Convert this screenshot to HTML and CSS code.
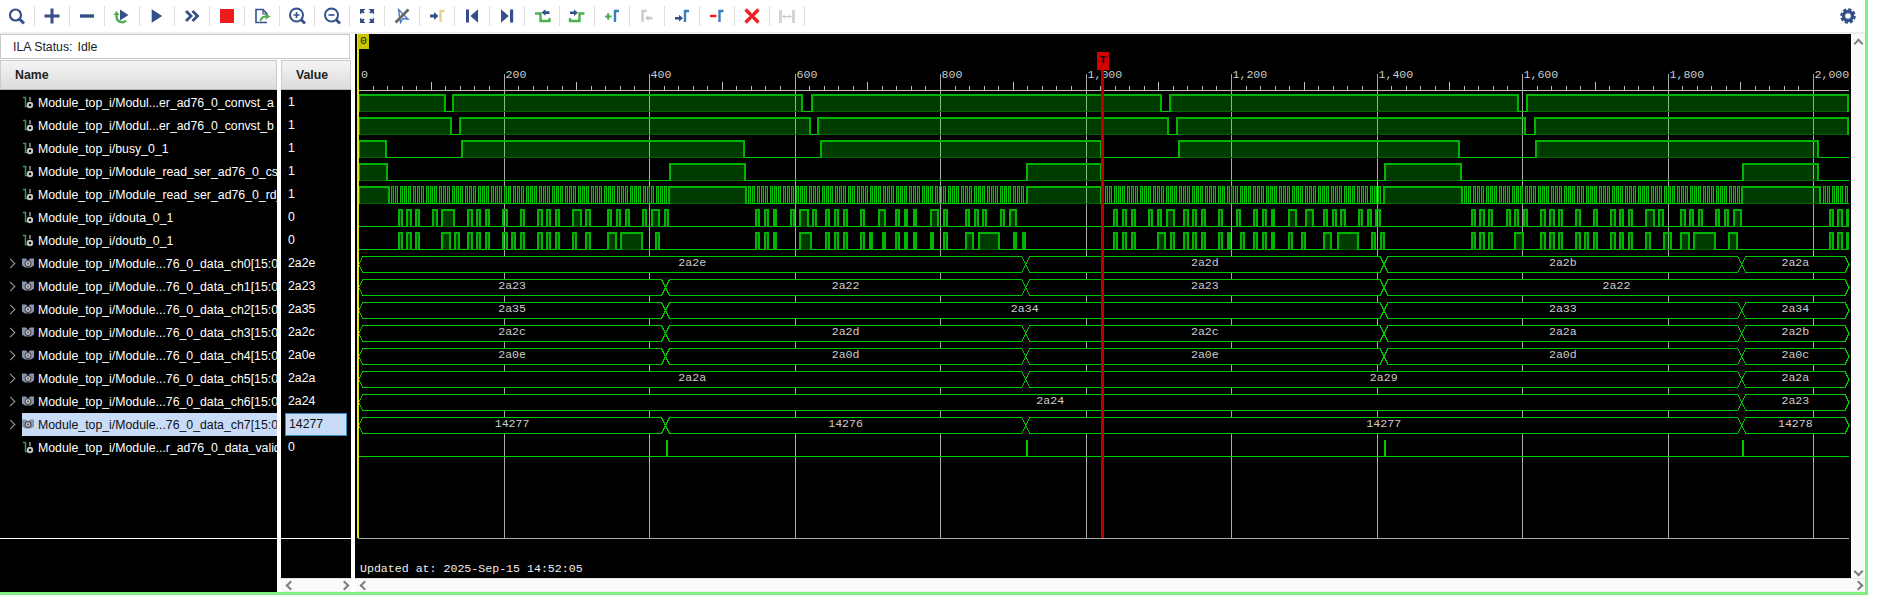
FILE: index.html
```html
<!DOCTYPE html>
<html lang="en">
<head>
    <meta charset="UTF-8">
    <title>ILA Waveform</title>
    <link rel="stylesheet" href="styles.css">
</head>
<body>
<div class="app">
    <div class="toolbar">
        <div class="tool"><svg viewBox="0 0 24 24"><circle class="nv" cx="10.5" cy="11" r="5.5" stroke-width="2.2"/><path class="nv" d="M14.5 15l4.5 4.5" stroke-width="3"/></svg></div>
        <div class="tool"><svg viewBox="0 0 24 24"><path class="nv" d="M4.5 12h15M12 4.5v15" stroke-width="3"/></svg></div>
        <div class="tool"><svg viewBox="0 0 24 24"><path class="nv" d="M5 12h14" stroke-width="3.4"/></svg></div>
        <div class="tool"><svg viewBox="0 0 24 24"><path class="gr" d="M6.5 9v4a5.5 5.5 0 0 0 9.5 3.5" stroke-width="2.4"/><path class="fnv" d="M10 5.5l8.5 5.5-8.5 5.5z"/><path class="fgr" d="M3.5 11h6l-3-4z"/></svg></div>
        <div class="tool"><svg viewBox="0 0 24 24"><path class="fnv" d="M6.7 5.2L17.2 12 6.7 18.8z"/></svg></div>
        <div class="tool"><svg viewBox="0 0 24 24"><path class="nv" d="M6 7l5 5-5 5M12.5 7l5 5-5 5" stroke-width="2.8"/></svg></div>
        <div class="tool"><svg viewBox="0 0 24 24"><rect x="5" y="5" width="14" height="14" fill="#ee1c1c"/></svg></div>
        <div class="tool"><svg viewBox="0 0 24 24"><path class="nv" d="M17 14V10l-4-4.5H6v13h11" stroke-width="1.6"/><path class="nv" d="M13 5.5V10h4" stroke-width="1.2"/><path class="gr" d="M10.5 17c.5-3 2.5-4.5 6-4.5" stroke-width="2"/><path class="fgr" d="M15.5 9.5l5 3-5 3z"/></svg></div>
        <div class="tool"><svg viewBox="0 0 24 24"><circle class="nv" cx="11.5" cy="11" r="6.5" stroke-width="2"/><path class="nv" d="M8.5 11h6M11.5 8v6" stroke-width="1.6"/><path class="nv" d="M16 15.5l4 4" stroke-width="2.8"/></svg></div>
        <div class="tool"><svg viewBox="0 0 24 24"><circle class="nv" cx="11.5" cy="11" r="6.5" stroke-width="2"/><path class="nv" d="M8.5 11h6" stroke-width="1.6"/><path class="nv" d="M16 15.5l4 4" stroke-width="2.8"/></svg></div>
        <div class="tool"><svg viewBox="0 0 24 24"><path class="fnv" d="M5 5h5.5L5 10.5zM19 5v5.5L13.5 5zM5 19v-5.5l5.5 5.5zM19 19h-5.5l5.5-5.5z"/><path class="nv" d="M6 6l3 3M18 6l-3 3M6 18l3-3M18 18l-3-3" stroke-width="1.8"/></svg></div>
        <div class="tool"><svg viewBox="0 0 24 24"><path d="M8.5 5.500l2 13 2.500-4 5 .5z" fill="none" stroke="#4a78b8" stroke-width="1.4"/><path d="M5.5 18.5L18.5 5.500" fill="none" stroke="#666" stroke-width="2.6"/></svg></div>
        <div class="tool"><svg viewBox="0 0 24 24"><path class="fnv" d="M5 10.500h4V8l4.500 4L9 16v-2.500H5z"/><path class="mk" d="M15.5 18V7h4" stroke="#e8d088"/></svg></div>
        <div class="tool"><svg viewBox="0 0 24 24"><path class="fnv" d="M6 5.500h3v13H6zM18 5.300v13.400L10.500 12z"/></svg></div>
        <div class="tool"><svg viewBox="0 0 24 24"><path class="fnv" d="M6 5.300v13.400L13.700 12zM15 5.500h3.200v13H15z"/></svg></div>
        <div class="tool"><svg viewBox="0 0 24 24"><path class="gr" d="M5 9.500h5.500V17H19.500V14" stroke-width="2.4"/><path class="fnv" d="M11.500 8.500l4-3.200v2h4v2.600h-4v1.800z"/></svg></div>
        <div class="tool"><svg viewBox="0 0 24 24"><path class="gr" d="M5 14v3h9.500V9.500H19.500" stroke-width="2.4"/><path class="fnv" d="M13 8.700l-4-3.200v2H5v2.600h4v1.800z"/></svg></div>
        <div class="tool"><svg viewBox="0 0 24 24"><path class="gr" d="M5 12.500h6.500M8.200 9.200v6.600" stroke-width="2.2"/><path class="mk" d="M15 18V7h4" stroke="#3c80b8"/></svg></div>
        <div class="tool"><svg viewBox="0 0 24 24"><path class="mk" d="M7.500 18V7h4" stroke="#cacaca"/><path d="M10 14l3.500-3v1.800h4v2.600h-4V17z" fill="#cacaca"/></svg></div>
        <div class="tool"><svg viewBox="0 0 24 24"><path class="fnv" d="M5 13h4v-2.200l4 3.400-4 3.400v-2.200H5z"/><path class="mk" d="M15 18V7h4" stroke="#3c80b8"/></svg></div>
        <div class="tool"><svg viewBox="0 0 24 24"><path d="M5 12h6.500" stroke="#ee1c1c" stroke-width="2.4" fill="none"/><path class="mk" d="M14.500 18V7h4" stroke="#3c80b8"/></svg></div>
        <div class="tool"><svg viewBox="0 0 24 24"><path d="M5.500 5.500l13 13M18.500 5.500l-13 13" stroke="#ee1c1c" stroke-width="3.2" fill="none"/></svg></div>
        <div class="tool"><svg viewBox="0 0 24 24"><path d="M5.500 6v13M18.500 6v13" stroke="#d4d4d4" stroke-width="3" fill="none"/><path d="M8 12.500h8M10 10.500l-2 2 2 2M14 10.500l2 2-2 2" stroke="#c4c4c4" fill="none"/></svg></div>
        <div class="tool-gear"><svg viewBox="0 0 24 24"><circle cx="12" cy="12" r="4.5" fill="none" stroke="#34508a" stroke-width="3.4"/><circle cx="12" cy="12" r="6.6" fill="none" stroke="#34508a" stroke-width="2.4" stroke-dasharray="3.2 1.98"/></svg></div>
    </div>

    <div class="main">
        <div class="left">
            <div class="status">ILA Status:<span class="status-val">Idle</span></div>
            <div class="cols">
                <div class="col-names">
                    <div class="col-head">Name</div>
                    <div class="rows" id="nameRows"></div>
                </div>
                <div class="col-values">
                    <div class="col-head">Value</div>
                    <div class="rows" id="valueRows"></div>
                    <div class="col-rest"></div>
                    <div class="hscroll"><span class="chev chev-l"></span><span class="chev chev-r"></span></div>
                </div>
            </div>
        </div>
        <div class="right">
            <div class="wave-row">
                <svg class="wave" id="wave" viewBox="355 34 1496 544" width="1496" height="544"></svg>
                <div class="vscroll"><span class="chev chev-u"></span><span class="chev chev-d"></span></div>
            </div>
            <div class="hscroll"><span class="chev chev-l"></span><span class="chev chev-r"></span></div>
        </div>
    </div>
</div>
<script src="wave.js"></script>
</body>
</html>
```

FILE: styles.css
```css
* {
    box-sizing: border-box;
}
body {
    margin: 0;
    background: #fff;
    font-family: "Liberation Sans", Arial, sans-serif;
    font-size: 12.3px;
    overflow: hidden;
}
.app {
    width: 1868px;
    height: 595px;
    border-right: 3px solid #80ee80;
    border-bottom: 3px solid #80ee80;
}

/* toolbar */
.toolbar {
    display: flex;
    align-items: center;
    height: 34px;
    border-bottom: 2px solid #eeeeee;
    background: #fff;
}
.tool {
    width: 35px;
    height: 20px;
    border-right: 1px solid #dddddd;
    display: flex;
    align-items: center;
    justify-content: center;
    padding-right: 1px;
}
.tool svg, .tool-gear svg {
    flex: none;
    width: 24px;
    height: 24px;
}
.tool-gear {
    margin-left: auto;
    width: 34px;
    display: flex;
    justify-content: center;
}
.nv {
    fill: none;
    stroke: #34508a;
}
.gr {
    fill: none;
    stroke: #4cb050;
}
.fnv {
    fill: #34508a;
}
.fgr {
    fill: #4cb050;
}
.mk {
    fill: none;
    stroke-width: 2.4;
}

/* left panels */
.main {
    display: flex;
    height: 558px;
}
.left {
    width: 351px;
    display: flex;
    flex-direction: column;
}
.status {
    width: 350px;
    height: 25px;
    margin-bottom: 1px;
    padding-left: 12px;
    line-height: 24px;
    border: 1px solid #c8c8c8;
    color: #222;
}
.status-val {
    margin-left: 5px;
}
.cols {
    display: flex;
    gap: 4px;
    flex: 1;
}
.col-names {
    width: 277px;
    background: #000;
}
.col-values {
    width: 70px;
    background: #000;
    display: flex;
    flex-direction: column;
}
.col-head {
    height: 30px;
    line-height: 29px;
    font-weight: bold;
    color: #222;
    background: linear-gradient(#f4f4f4, #dcdcdc);
    border: 1px solid #cccccc;
    border-bottom-color: #b8b8b8;
    padding-left: 14px;
}
.rows {
    height: 449px;
    padding-top: 1px;
    border-bottom: 1px solid #fff;
}
.col-rest {
    flex: 1;
}
.row {
    display: flex;
    align-items: center;
    height: 23px;
    color: #fff;
    white-space: nowrap;
    overflow: hidden;
}
.row-arrow {
    flex: none;
    width: 22px;
    display: flex;
    justify-content: center;
    padding-right: 2px;
}
.row-main {
    flex: 1;
    min-width: 0;
    height: 23px;
    display: flex;
    align-items: center;
    overflow: hidden;
}
.row-main svg {
    flex: none;
    width: 12px;
    height: 14px;
    margin-right: 4px;
}
.row.selected .row-main {
    background: #c8dcf8;
    color: #111;
}
.val {
    height: 23px;
    line-height: 23px;
    padding-left: 7px;
    color: #fff;
}
.val.selected {
    margin-left: 4px;
    width: 62px;
    padding-left: 3px;
    line-height: 21px;
    color: #111;
    background: #c8dcf8;
    border: 1px solid #3c8cc8;
}

/* waveform */
.right {
    margin-left: 4px;
    flex: 1;
    display: flex;
    flex-direction: column;
}
.wave-row {
    display: flex;
    height: 544px;
}
.wave {
    display: block;
    flex: none;
    background: #000;
    font-family: "Liberation Mono", "Courier New", monospace;
}
.wave text {
    font-size: 11.6px;
}
.vscroll {
    flex: 1;
    position: relative;
    background: #fafafa;
}
.hscroll {
    position: relative;
    height: 14px;
    background: #fafafa;
    border-top: 1px solid #e4e4e4;
    border-bottom: 1px solid #eeeeee;
}
.chev {
    position: absolute;
    width: 7px;
    height: 7px;
    border-left: 2px solid #808080;
    border-top: 2px solid #808080;
}
.chev-l {
    left: 6px;
    top: 3px;
    transform: rotate(-45deg);
}
.chev-r {
    right: 3px;
    top: 3px;
    transform: rotate(135deg);
}
.chev-u {
    left: 4px;
    top: 6px;
    transform: rotate(45deg);
}
.chev-d {
    left: 4px;
    bottom: 3px;
    transform: rotate(225deg);
}
.arrow-right {
    display: block;
    width: 7px;
    height: 7px;
    border-right: 1.5px solid #a0a0a0;
    border-top: 1.5px solid #a0a0a0;
    transform: rotate(45deg);
}
```

FILE: wave.js
```js
// left panel rows
const longName = "Module_top_i/Module...76_0_data_ch";
const signals = [
    { name: "Module_top_i/Modul...er_ad76_0_convst_a", value: "1" },
    { name: "Module_top_i/Modul...er_ad76_0_convst_b", value: "1" },
    { name: "Module_top_i/busy_0_1", value: "1" },
    { name: "Module_top_i/Module_read_ser_ad76_0_cs_n", value: "1" },
    { name: "Module_top_i/Module_read_ser_ad76_0_rd_n", value: "1" },
    { name: "Module_top_i/douta_0_1", value: "0" },
    { name: "Module_top_i/doutb_0_1", value: "0" },
    { name: longName + "0[15:0]", value: "2a2e", bus: true },
    { name: longName + "1[15:0]", value: "2a23", bus: true },
    { name: longName + "2[15:0]", value: "2a35", bus: true },
    { name: longName + "3[15:0]", value: "2a2c", bus: true },
    { name: longName + "4[15:0]", value: "2a0e", bus: true },
    { name: longName + "5[15:0]", value: "2a2a", bus: true },
    { name: longName + "6[15:0]", value: "2a24", bus: true },
    { name: longName + "7[15:0]", value: "14277", bus: true, selected: true },
    { name: "Module_top_i/Module...r_ad76_0_data_valid", value: "0" }
];

const wireIcon = '<svg viewBox="0 0 12 14"><path d="M1 1.500h2.500v9H6" fill="none" stroke="#3c9a50" stroke-width="1.5"/><path d="M8 1v4" stroke="#999" stroke-width="1.5"/><circle cx="8" cy="9" r="2.2" fill="none" stroke="#c4c4c4" stroke-width="2"/></svg>';
const busIcon = '<svg viewBox="0 0 12 14"><path d="M0 1.500h4l2 2 2-2h4v7l-3 2H3l-3-2z" fill="#8494ae"/><circle cx="6" cy="6.500" r="3" fill="#c0c0c0" stroke="#333"/><circle cx="6" cy="6.500" r="1" fill="#555"/></svg>';

let nameHtml = "";
let valueHtml = "";
signals.forEach(s => {
    const sel = s.selected ? " selected" : "";
    nameHtml += `<div class="row${sel}">
        <div class="row-arrow">${s.bus ? '<span class="arrow-right"></span>' : ""}</div>
        <div class="row-main">${s.bus ? busIcon : wireIcon}<span>${s.name}</span></div>
    </div>`;
    valueHtml += `<div class="val${sel}">${s.value}</div>`;
});
document.getElementById("nameRows").innerHTML = nameHtml;
document.getElementById("valueRows").innerHTML = valueHtml;

// waveform canvas, coordinates are page pixels
const END = 1849;
const timeX = t => 358 + t * 0.7275;
let grid = "", fills = "", traces = "", buses = "", labels = "";

function line(d, stroke, width) {
    return `<path d="${d}" fill="none" stroke="${stroke}" stroke-width="${width}"/>`;
}

for (let t = 0; t <= 2000; t += 20) {
    const x = Math.round(timeX(t)) + 0.5;
    if (t % 200 === 0 && t > 0) {
        grid += line(`M${x} 74V538`, "#a8a8a8", 1);
    } else if (t % 100 === 0 && t > 0) {
        grid += line(`M${x} 82V90`, "#c0c0c0", 1);
    } else if (t > 0) {
        grid += line(`M${x} 86V90`, "#c0c0c0", 1);
    }
    if (t % 200 === 0) {
        const text = t >= 1000 ? Math.floor(t / 1000) + "," + String(t % 1000).padStart(3, "0") : t;
        labels += `<text x="${t ? x + 1 : 361}" y="77.5" fill="#cccccc">${text}</text>`;
    }
}
grid += line("M358 90.5H1849", "#c0c0c0", 1.5);
grid += line("M358 538.5H1849", "#a8a8a8", 1);

// highs are [from, to] outer edges, a third item marks a thin clock pulse
function digital(row, highs) {
    const top = 95 + 23 * row, low = 111 + 23 * row;
    let prev = 358.7;
    highs.forEach(([a, b, thin]) => {
        a = Math.round(a);
        b = Math.min(Math.round(b), END);
        if (a > prev) traces += line(`M${prev} ${low + 0.5}H${a}`, "#00d000", 1);
        fills += `<rect x="${a}" y="${top}" width="${b - a}" height="${low - top}" fill="rgba(0,255,0,0.235)"/>`;
        fills += line(`M${a} ${low + 0.5}H${b}`, thin ? "#00b400" : "#006400", 1);
        if (thin) {
            traces += line(`M${a + 0.5} ${low + 1}V${top - 0.5}H${b - 0.5}V${low + 1}`, "#00c400", 1);
        } else {
            traces += line(`M${a + 1} ${low + 1}V${top}H${b - 1}V${low + 1}`, "#00b400", 2);
        }
        prev = b;
    });
    if (prev < END) traces += line(`M${prev} ${low + 0.5}H${END}`, "#00d000", 1);
}

function pairs(base, list) {
    const out = [];
    for (let i = 0; i < list.length; i += 2) {
        out.push([base + list[i] / 3, base + list[i + 1] / 3]);
    }
    return out;
}

function clock(from, to) {
    const out = [];
    const period = 4.34;
    for (let x = from; x + 2 < to; x += period) {
        out.push([x, x + 3, true]);
    }
    return out;
}

digital(0, [[358, 445.7], [452.3, 803.3], [810.7, 1161.7], [1168.7, 1519], [1526.3, END]]);
digital(1, [[358, 452.3], [459.3, 810.7], [817.3, 1168.7], [1175.7, 1526.3], [1533.7, END]]);
digital(2, [[358, 386.7], [461.3, 745], [820, 1101.7], [1177.7, 1460], [1535.3, 1818.7]]);
digital(3, [[358, 387.7], [668.7, 745.7], [1026.3, 1101.7], [1384.3, 1462], [1741.7, 1818.7]]);
digital(4, [
    [358, 390.3], ...clock(391, 667), [667.5, 747], ...clock(748, 1025), [1025.7, 1102],
    ...clock(1105, 1383), [1383, 1463], ...clock(1464, 1741), [1741, 1821], ...clock(1823, END)
]);

digital(5, [
    ...pairs(350, [145,158,169,185,196,209,247,263,274,314,352,368,379,392,406,419,457,473,511,524,562,578,589,602,616,629,667,695,706,722,772,785,799,812,826,839,877,890,904,929,943,956]),
    ...pairs(740, [46,61,73,88,100,112,151,166,178,206,217,232,256,271,283,296,310,323,361,376,415,439,466,481,493,505,520,532,571,598,610,625,676,689,703,716,727,742,781,794,808,832]),
    ...pairs(1000, [340,355,367,382,394,407,445,460,472,485,499,526,550,566,577,590,604,617,655,670,709,722,760,775,787,800,814,826,865,892,916,943,970,983,997,1010,1021,1037,1075,1088,1102,1115,1126,1142]),
    ...pairs(1380, [274,287,298,314,325,338]),
    ...pairs(1500, [19,32,43,58,70,83,121,137,148,164,175,188,226,242,280,293,331,347,358,371,385,398,436,464,475,491,541,557,568,581,595,608,646,659,673,686,700,725,988,1001,1012,1028,1039,1047])
]);
digital(6, [
    ...pairs(350, [145,158,169,185,196,209,274,302,313,329,352,368,379,392,406,419,457,473,484,497,511,524,562,578,589,602,616,629,667,680,706,722,772,800,811,878,916,929]),
    ...pairs(740, [46,61,73,88,100,112,178,217,256,271,283,296,310,323,361,376,388,400,427,439,466,481,493,505,520,532,571,583,610,625,676,703,715,781,820,832,847,859]),
    ...pairs(1000, [340,355,367,382,394,407,472,499,511,526,550,566,577,590,604,617,655,670,682,694,721,734,760,773,787,800,814,826,865,878,904,917,970,997,1010,1076,1114,1127,1141,1154]),
    ...pairs(1380, [274,287,298,314,325,338]),
    ...pairs(1500, [43,71,121,137,148,164,175,188,226,242,253,266,280,293,331,347,358,371,385,398,436,452,490,516,541,569,580,647,685,713,988,1001,1012,1028,1039,1047])
]);

function bus(row, segments) {
    const top = 95 + 23 * row + 0.5, bot = top + 16, mid = top + 8;
    segments.forEach(([a, b, text]) => {
        buses += `<path d="M${a} ${mid}L${a + 4} ${top}H${b - 4}L${b} ${mid}L${b - 4} ${bot}H${a + 4}Z" fill="#000" stroke="#00c800" stroke-width="1"/>`;
        labels += `<text x="${(a + b) / 2}" y="${top + 9.5}" fill="#cccccc" text-anchor="middle">${text}</text>`;
    });
}

const S = 358.7, A = 665.5, B = 1025.7, C = 1384, D = 1741.7;
bus(7, [[S, B, "2a2e"], [B, C, "2a2d"], [C, D, "2a2b"], [D, END, "2a2a"]]);
bus(8, [[S, A, "2a23"], [A, B, "2a22"], [B, C, "2a23"], [C, END, "2a22"]]);
bus(9, [[S, A, "2a35"], [A, C, "2a34"], [C, D, "2a33"], [D, END, "2a34"]]);
bus(10, [[S, A, "2a2c"], [A, B, "2a2d"], [B, C, "2a2c"], [C, D, "2a2a"], [D, END, "2a2b"]]);
bus(11, [[S, A, "2a0e"], [A, B, "2a0d"], [B, C, "2a0e"], [C, D, "2a0d"], [D, END, "2a0c"]]);
bus(12, [[S, B, "2a2a"], [B, D, "2a29"], [D, END, "2a2a"]]);
bus(13, [[S, D, "2a24"], [D, END, "2a23"]]);
bus(14, [[S, A, "14277"], [A, B, "14276"], [B, D, "14277"], [D, END, "14278"]]);

// data_valid: low line with one short pulse per frame
traces += line(`M358 456.5H${END}`, "#00d000", 1);
[A, B, C, D].forEach(x => {
    traces += `<rect x="${Math.round(x)}" y="440" width="2" height="16" fill="#00c800"/>`;
});

const markers = `
    <path d="M358 34V538" stroke="#e8e800" stroke-width="2"/>
    <rect x="358" y="34" width="11" height="15" fill="#c8c800"/>
    <text x="360" y="44" fill="#222">0</text>
    <rect x="1101" y="60" width="3" height="478" fill="#bc0000"/>
    <rect x="1097" y="52" width="12" height="18" fill="#d40000"/>
    <text x="1099.5" y="62.5" fill="#111" font-weight="bold">T</text>
    <text x="360" y="572" fill="#eeeeee">Updated at: 2025-Sep-15 14:52:05</text>`;

document.getElementById("wave").innerHTML =
    `<g shape-rendering="crispEdges">${grid}${fills}${traces}${buses}</g>${labels}${markers}`;
```
